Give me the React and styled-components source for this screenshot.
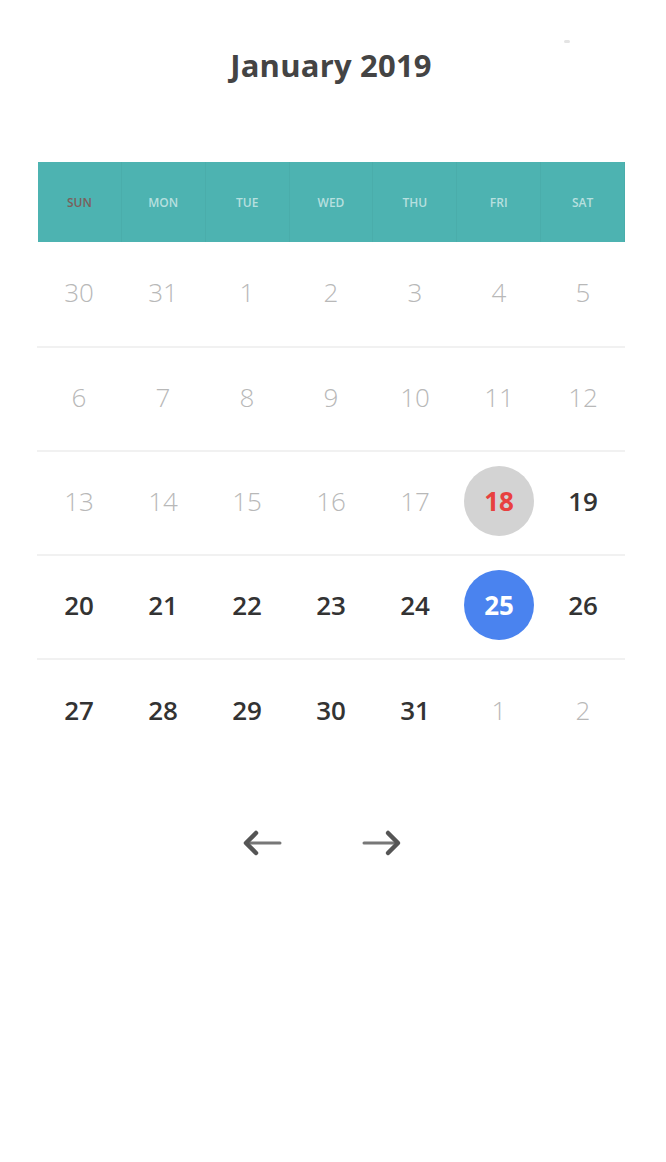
import React from 'react';
import styled, { createGlobalStyle } from 'styled-components';

const GlobalStyle = createGlobalStyle`
  html, body {
    margin: 0;
    padding: 0;
    background: #fff;
    font-family: "Open Sans", "Liberation Sans", sans-serif;
  }
`;

const weekdays = ['SUN', 'MON', 'TUE', 'WED', 'THU', 'FRI', 'SAT'];

const weeks = [
  [[30, 'muted'], [31, 'muted'], [1, 'muted'], [2, 'muted'], [3, 'muted'], [4, 'muted'], [5, 'muted']],
  [[6, 'muted'], [7, 'muted'], [8, 'muted'], [9, 'muted'], [10, 'muted'], [11, 'muted'], [12, 'muted']],
  [[13, 'muted'], [14, 'muted'], [15, 'muted'], [16, 'muted'], [17, 'muted'], [18, 'today'], [19, 'active']],
  [[20, 'active'], [21, 'active'], [22, 'active'], [23, 'active'], [24, 'active'], [25, 'selected'], [26, 'active']],
  [[27, 'active'], [28, 'active'], [29, 'active'], [30, 'active'], [31, 'active'], [1, 'muted'], [2, 'muted']]
];

const
  Page = styled.div`
    position: relative;
    width: 666px;
    height: 1162px;
    padding: 0 41px 0 37px;
    box-sizing: border-box;
  `,
  Title = styled.h1`
    margin: 0;
    padding: 44px 0 0 0;
    height: 162px;
    box-sizing: border-box;
    text-align: center;
    font-size: 31px;
    font-weight: 700;
    color: #444;
    letter-spacing: 0.2px;
  `,
  Dot = styled.span`
    position: absolute;
    top: 40px;
    left: 564px;
    width: 6px;
    height: 3px;
    border-radius: 2px;
    background: #e4e4e4;
  `,
  WeekBar = styled.div`
    display: grid;
    grid-template-columns: repeat(7, 1fr);
    height: 80px;
    margin-left: 1px;
    background: #4db3b1;
  `,
  WeekDay = styled.div`
    display: flex;
    align-items: center;
    justify-content: center;
    font-size: 12px;
    font-weight: 600;
    color: ${p => p.sunday ? '#7b5f5c' : 'rgba(255,255,255,0.6)'};
    border-right: 1px solid rgba(0,0,0,0.03);
  `,
  Week = styled.div`
    display: grid;
    grid-template-columns: repeat(7, 1fr);
    height: ${p => p.first ? 106 : 104}px;
    box-sizing: border-box;
    padding-bottom: 4px;
    border-bottom: ${p => p.last ? 'none' : '2px solid #f1f1f1'};
  `,
  Cell = styled.div`
    display: flex;
    align-items: center;
    justify-content: center;
  `,
  Day = styled.span`
    display: flex;
    align-items: center;
    justify-content: center;
    width: 70px;
    height: 70px;
    border-radius: 50%;
    font-size: 26px;
    color: ${p => ({
      muted: '#b8b8b8',
      active: '#333',
      today: '#e8403f',
      selected: '#fff'
    })[p.kind]};
    background: ${p => ({
      today: '#d3d3d3',
      selected: '#4a83ef'
    })[p.kind] || 'transparent'};
    font-weight: ${p => p.kind === 'today' || p.kind === 'selected' ? 700 : p.kind === 'active' ? 600 : 300};
  `,
  Nav = styled.div`
    display: flex;
    justify-content: center;
    gap: 76px;
    margin-top: 64px;
    padding-right: 18px;
  `,
  ArrowButton = styled.button`
    display: flex;
    align-items: center;
    justify-content: center;
    width: 42px;
    height: 30px;
    padding: 0;
    border: none;
    background: none;
    cursor: pointer;
  `;

const Arrow = ({ dir }) => (
  <svg width="42" height="30" viewBox="0 0 42 30" fill="none">
    <g transform={dir === 'right' ? 'translate(42 0) scale(-1 1)' : undefined}>
      <path d="M4 15 H38" stroke="#777" strokeWidth="3" strokeLinecap="round" />
      <path d="M14 5 L4 15 L14 25" stroke="#555" strokeWidth="4.5" strokeLinecap="round" strokeLinejoin="round" />
    </g>
  </svg>
);

export default function App() {
  return <React.Fragment>
    <GlobalStyle />
    <Page>
      <Title>January 2019</Title>
      <Dot />
      <WeekBar>
        {weekdays.map(d => <WeekDay key={d} sunday={d === 'SUN'}>{d}</WeekDay>)}
      </WeekBar>
      {weeks.map((week, i) =>
        <Week key={i} first={i === 0} last={i === weeks.length - 1}>
          {week.map(([n, kind], j) =>
            <Cell key={j}><Day kind={kind}>{n}</Day></Cell>
          )}
        </Week>
      )}
      <Nav>
        <ArrowButton><Arrow dir="left" /></ArrowButton>
        <ArrowButton><Arrow dir="right" /></ArrowButton>
      </Nav>
    </Page>
  </React.Fragment>;
}
